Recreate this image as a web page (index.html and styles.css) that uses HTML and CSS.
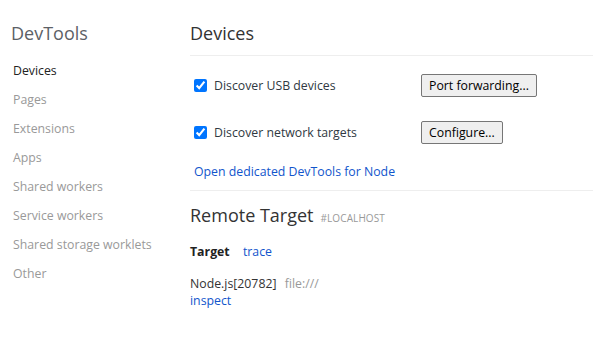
FILE: index.html
```html
<!DOCTYPE html>
<html lang="en">
<head>
    <meta charset="UTF-8">
    <title>Inspect with Chrome Developer Tools</title>
    <link rel="stylesheet" href="styles.css">
</head>
<body>
    <div class="sidebar">
        <h1 class="brand">DevTools</h1>
        <ul class="nav">
            <li class="selected">Devices</li>
            <li>Pages</li>
            <li>Extensions</li>
            <li>Apps</li>
            <li>Shared workers</li>
            <li>Service workers</li>
            <li>Shared storage worklets</li>
            <li>Other</li>
        </ul>
    </div>

    <div class="main">
        <div class="page-header">
            <h1>Devices</h1>
        </div>

        <div class="options">
            <div class="option-row">
                <label class="option"><input type="checkbox" checked> Discover USB devices</label>
                <button class="action">Port forwarding...</button>
            </div>
            <div class="option-row">
                <label class="option"><input type="checkbox" checked> Discover network targets</label>
                <button class="action">Configure...</button>
            </div>
            <a class="link node-link" href="#">Open dedicated DevTools for Node</a>
        </div>

        <div class="device">
            <div class="device-header">
                <h2>Remote Target</h2>
                <span class="device-serial">#LOCALHOST</span>
            </div>
            <div class="browser-header">
                <span class="browser-name">Target</span>
                <a class="link" href="#">trace</a>
            </div>
            <div class="target">
                <div class="target-line">
                    <span class="target-name">Node.js[20782]</span>
                    <span class="target-url">file:///</span>
                </div>
                <a class="link" href="#">inspect</a>
            </div>
        </div>
    </div>
</body>
</html>
```

FILE: styles.css
```css
body {
    font-family: "Open Sans", "Noto Sans", sans-serif;
    font-size: 12.3px;
    color: #303942;
    margin: 0;
    padding: 0;
    display: flex;
    flex-direction: row;
    height: 100vh;
    background: #fff;
}
.sidebar {
    width: 190px;
    flex-shrink: 0;
}
.brand {
    font-size: 18px;
    font-weight: normal;
    color: #5c6166;
    margin: 21px 0 0 11px;
    line-height: 24px;
}
.nav {
    list-style: none;
    margin: 11px 0 0 0;
    padding: 0 0 0 13px;
}
.nav li {
    line-height: 29px;
    color: #999;
}
.nav li.selected {
    color: #222;
}
.main {
    flex-grow: 1;
}
.page-header {
    border-bottom: 1px solid #eee;
    padding: 21px 0 10px 0;
}
.page-header h1 {
    font-size: 18px;
    font-weight: normal;
    color: #333;
    margin: 0;
    line-height: 24px;
}
.options {
    padding: 17px 0 8px 4px;
    border-bottom: 1px solid #eee;
}
.option-row {
    display: flex;
    align-items: center;
    height: 24px;
    margin-bottom: 23px;
}
.option {
    width: 227px;
    display: flex;
    align-items: center;
}
.option input {
    margin: 0 7px 0 0;
    width: 13px;
    height: 13px;
}
.action {
    font-family: inherit;
    font-size: 12.3px;
    color: #000;
    background: #efefef;
    border: 1px solid #767676;
    border-radius: 2px;
    padding: 1px 7px;
    height: 23px;
}
.link {
    color: #1155cc;
    text-decoration: none;
}
.node-link {
    display: block;
    margin-top: -5px;
    line-height: 20px;
}
.device-header {
    display: flex;
    align-items: baseline;
    margin-top: 12px;
}
.device-header h2 {
    font-size: 18px;
    font-weight: normal;
    color: #333;
    margin: 0 7px 0 0;
    line-height: 24px;
}
.device-serial {
    font-size: 10px;
    letter-spacing: 0.1px;
    color: #999;
}
.browser-header {
    margin-top: 15px;
    line-height: 20px;
}
.browser-name {
    font-weight: bold;
    color: #222;
    margin-right: 10px;
}
.target {
    margin-top: 13px;
    line-height: 17px;
}
.target-name {
    color: #333;
    margin-right: 5px;
}
.target-url {
    color: #999;
}
```
